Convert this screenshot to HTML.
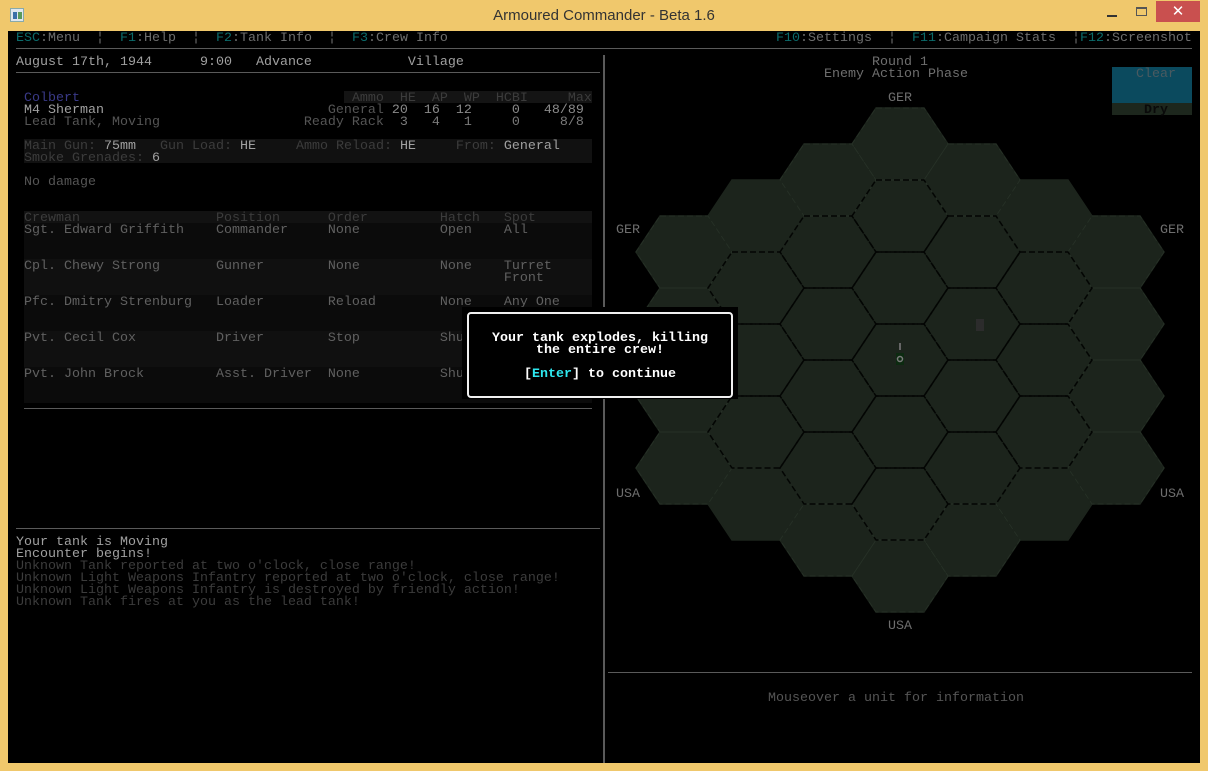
<!DOCTYPE html>
<html><head><meta charset="utf-8"><style>
*{margin:0;padding:0;box-sizing:border-box}
body{width:1208px;height:771px;background:#f0c86c;position:relative;overflow:hidden;font-family:"Liberation Mono",monospace;font-size:13.333px;line-height:12px}
#con{position:absolute;left:8px;top:31px;width:1192px;height:732px;background:#000;overflow:hidden}
.t{position:absolute;white-space:pre;height:12px;margin-top:2px}
.k{color:#0b6b6b}.g{color:#6e6e6e}.w{color:#a0a0a0}.d{color:#555}.dd{color:#3c3c3c}.c{color:#606060}
.hl{position:absolute;height:1px;background:#5a5a5a}
</style></head><body>
<div style="position:absolute;left:10px;top:8px;width:14px;height:14px;background:#dfe6ee;border:1px solid #8aa"><div style="position:absolute;left:2px;top:3px;width:4px;height:7px;background:#3a6fa8"></div><div style="position:absolute;left:7px;top:3px;width:4px;height:7px;background:#5a9a5a"></div></div>
<div style="position:absolute;left:0;width:1208px;top:6px;text-align:center;font-family:'Liberation Sans',sans-serif;font-size:15px;line-height:20px;color:#333">Armoured Commander - Beta 1.6</div>
<div style="position:absolute;left:1107px;top:15px;width:10px;height:2px;background:#333"></div>
<div style="position:absolute;left:1136px;top:7px;width:11px;height:9px;border:1px solid #555;border-top-width:2px"></div>
<div style="position:absolute;left:1156px;top:1px;width:44px;height:21px;background:#c9504f;color:#fff;font-family:'Liberation Sans',sans-serif;font-size:15px;line-height:21px;text-align:center">✕</div>

<div id="con">
<div class="t" style="left:8px;top:0"><span class="k">ESC</span><span class="g">:Menu  ¦  </span><span class="k">F1</span><span class="g">:Help  ¦  </span><span class="k">F2</span><span class="g">:Tank Info  ¦  </span><span class="k">F3</span><span class="g">:Crew Info</span></div>
<div class="t" style="left:768px;top:0"><span class="k">F10</span><span class="g">:Settings  ¦  </span><span class="k">F11</span><span class="g">:Campaign Stats  ¦</span><span class="k">F12</span><span class="g">:Screenshot</span></div>
<div class="hl" style="left:8px;top:17px;width:1176px"></div>

<div class="t w" style="left:8px;top:24px">August 17th, 1944      9:00   Advance            Village</div>
<div class="hl" style="left:8px;top:41px;width:584px"></div>

<div style="position:absolute;left:336px;top:60px;width:248px;height:12px;background:#141414"></div>
<div class="t" style="left:16px;top:60px"><span style="color:#3a3a88">Colbert</span><span class="dd">                                  Ammo  HE  AP  WP  HCBI     Max</span></div>
<div class="t" style="left:16px;top:72px"><span class="w">M4 Sherman</span><span class="d">                            General </span><span style="color:#8a8a8a">20  16  12     0   48/89</span></div>
<div class="t" style="left:16px;top:84px"><span class="d">Lead Tank, Moving                  Ready Rack  </span><span style="color:#7a7a7a">3   4   1     0     8/8</span></div>

<div style="position:absolute;left:16px;top:108px;width:568px;height:24px;background:#111"></div>
<div class="t" style="left:16px;top:108px"><span class="dd">Main Gun: </span><span class="w">75mm</span><span class="dd">   Gun Load: </span><span class="w">HE</span><span class="dd">     Ammo Reload: </span><span class="w">HE</span><span class="dd">     From: </span><span class="w">General</span></div>
<div class="t" style="left:16px;top:120px"><span class="dd">Smoke Grenades: </span><span class="w">6</span></div>
<div class="t d" style="left:16px;top:144px">No damage</div>

<div style="position:absolute;left:16px;top:180px;width:568px;height:192px;background:#0b0b0b"></div>
<div style="position:absolute;left:16px;top:180px;width:568px;height:12px;background:#121212"></div>
<div style="position:absolute;left:16px;top:228px;width:568px;height:36px;background:#101010"></div>
<div style="position:absolute;left:16px;top:300px;width:568px;height:36px;background:#101010"></div>
<div class="t dd" style="left:16px;top:180px">Crewman                 Position      Order         Hatch   Spot</div>
<div class="t c" style="left:16px;top:192px">Sgt. Edward Griffith    Commander     None          Open    All</div>
<div class="t c" style="left:16px;top:228px">Cpl. Chewy Strong       Gunner        None          None    Turret</div>
<div class="t c" style="left:16px;top:240px">                                                            Front</div>
<div class="t c" style="left:16px;top:264px">Pfc. Dmitry Strenburg   Loader        Reload        None    Any One</div>
<div class="t c" style="left:16px;top:300px">Pvt. Cecil Cox          Driver        Stop          Shut</div>
<div class="t c" style="left:16px;top:336px">Pvt. John Brock         Asst. Driver  None          Shut</div>
<div class="hl" style="left:16px;top:377px;width:568px"></div>
<div class="hl" style="left:8px;top:497px;width:584px"></div>

<div class="t" style="left:8px;top:504px;color:#a0a0a0">Your tank is Moving</div>
<div class="t" style="left:8px;top:516px;color:#a0a0a0">Encounter begins!</div>
<div class="t dd" style="left:8px;top:528px">Unknown Tank reported at two o'clock, close range!</div>
<div class="t dd" style="left:8px;top:540px">Unknown Light Weapons Infantry reported at two o'clock, close range!</div>
<div class="t dd" style="left:8px;top:552px">Unknown Light Weapons Infantry is destroyed by friendly action!</div>
<div class="t dd" style="left:8px;top:564px">Unknown Tank fires at you as the lead tank!</div>

<div style="position:absolute;left:595px;top:24px;width:2px;height:708px;background:#5a5a5a"></div>

<div class="t g" style="left:864px;top:24px">Round 1</div>
<div class="t g" style="left:816px;top:36px">Enemy Action Phase</div>
<div style="position:absolute;left:1104px;top:36px;width:80px;height:36px;background:#0b4a5e"></div>
<div class="t" style="left:1128px;top:36px;color:#4a5a60">Clear</div>
<div style="position:absolute;left:1104px;top:72px;width:80px;height:12px;background:#1d271d"></div>
<div class="t" style="left:1136px;top:72px;color:#0a0a0a;font-weight:bold">Dry</div>

<svg style="position:absolute;left:-8px;top:-31px" width="1208" height="771">
<defs><polygon id="h" points="-24,-36 24,-36 48,0 24,36 -24,36 -48,0"/></defs>
<g fill="#1c241c" stroke="#1c241c" stroke-width="1.5">
<use href="#h" x="684" y="252"/><use href="#h" x="684" y="324"/><use href="#h" x="684" y="396"/><use href="#h" x="684" y="468"/>
<use href="#h" x="756" y="216"/><use href="#h" x="756" y="288"/><use href="#h" x="756" y="360"/><use href="#h" x="756" y="432"/><use href="#h" x="756" y="504"/>
<use href="#h" x="828" y="180"/><use href="#h" x="828" y="252"/><use href="#h" x="828" y="324"/><use href="#h" x="828" y="396"/><use href="#h" x="828" y="468"/><use href="#h" x="828" y="540"/>
<use href="#h" x="900" y="144"/><use href="#h" x="900" y="216"/><use href="#h" x="900" y="288"/><use href="#h" x="900" y="360"/><use href="#h" x="900" y="432"/><use href="#h" x="900" y="504"/><use href="#h" x="900" y="576"/>
<use href="#h" x="972" y="180"/><use href="#h" x="972" y="252"/><use href="#h" x="972" y="324"/><use href="#h" x="972" y="396"/><use href="#h" x="972" y="468"/><use href="#h" x="972" y="540"/>
<use href="#h" x="1044" y="216"/><use href="#h" x="1044" y="288"/><use href="#h" x="1044" y="360"/><use href="#h" x="1044" y="432"/><use href="#h" x="1044" y="504"/>
<use href="#h" x="1116" y="252"/><use href="#h" x="1116" y="324"/><use href="#h" x="1116" y="396"/><use href="#h" x="1116" y="468"/>
</g>
<g fill="none" stroke="#263026" stroke-width="1" stroke-dasharray="6 3">
<use href="#h" x="684" y="252"/><use href="#h" x="684" y="324"/><use href="#h" x="684" y="396"/><use href="#h" x="684" y="468"/>
<use href="#h" x="828" y="180"/><use href="#h" x="900" y="144"/><use href="#h" x="972" y="180"/><use href="#h" x="828" y="540"/><use href="#h" x="900" y="576"/><use href="#h" x="972" y="540"/>
<use href="#h" x="1116" y="252"/><use href="#h" x="1116" y="324"/><use href="#h" x="1116" y="396"/><use href="#h" x="1116" y="468"/>
</g>
<g fill="none" stroke="#030503" stroke-width="1.5" stroke-dasharray="6 3">
<use href="#h" x="756" y="288"/><use href="#h" x="756" y="360"/><use href="#h" x="756" y="432"/>
<use href="#h" x="828" y="252"/><use href="#h" x="828" y="324"/><use href="#h" x="828" y="396"/><use href="#h" x="828" y="468"/>
<use href="#h" x="900" y="216"/><use href="#h" x="900" y="288"/><use href="#h" x="900" y="360"/><use href="#h" x="900" y="432"/><use href="#h" x="900" y="504"/>
<use href="#h" x="972" y="252"/><use href="#h" x="972" y="324"/><use href="#h" x="972" y="396"/><use href="#h" x="972" y="468"/>
<use href="#h" x="1044" y="288"/><use href="#h" x="1044" y="360"/><use href="#h" x="1044" y="432"/>
</g>
<rect x="976" y="319" width="8" height="12" fill="#2c2c2c"/>
<rect x="896" y="353" width="8" height="12" fill="#0c2a10"/>
<circle cx="900" cy="359" r="2.5" fill="none" stroke="#7a7a7a" stroke-width="1.5"/>
<rect x="899" y="343" width="2" height="7" fill="#666"/>
</svg>
<div class="t g" style="left:880px;top:60px">GER</div>
<div class="t g" style="left:608px;top:192px">GER</div>
<div class="t g" style="left:1152px;top:192px">GER</div>
<div class="t g" style="left:608px;top:456px">USA</div>
<div class="t g" style="left:1152px;top:456px">USA</div>
<div class="t g" style="left:880px;top:588px">USA</div>

<div class="hl" style="left:600px;top:641px;width:584px"></div>
<div class="t d" style="left:760px;top:660px">Mouseover a unit for information</div>

<div style="position:absolute;left:454px;top:276px;width:276px;height:92px;background:#000"></div>
<div style="position:absolute;left:459px;top:281px;width:266px;height:86px;border:2px solid #f0f0f0;border-radius:4px;background:#000"></div>
<div class="t" style="left:459px;top:300px;width:266px;text-align:center;color:#fff;font-weight:bold">Your tank explodes, killing</div>
<div class="t" style="left:459px;top:312px;width:266px;text-align:center;color:#fff;font-weight:bold">the entire crew!</div>
<div class="t" style="left:459px;top:336px;width:266px;text-align:center;color:#fff;font-weight:bold">[<span style="color:#2ee8f0">Enter</span>] to continue</div>
</div>
</body></html>
